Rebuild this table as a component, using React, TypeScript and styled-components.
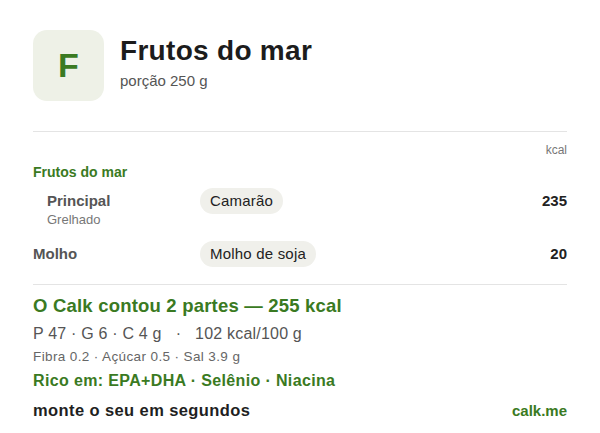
import React from "react";
import styled, { createGlobalStyle } from "styled-components";

const GlobalStyle = createGlobalStyle`
  html, body {
    margin: 0;
    padding: 0;
    background: #ffffff;
  }
  body {
    font-family: "Liberation Sans", Arial, Helvetica, sans-serif;
    color: #1f1f1f;
  }
`;

const green = "#3a7a22";

const Card = styled.div`
  width: 600px;
  height: 433px;
  box-sizing: border-box;
  padding: 30px 33px 0 33px;
  background: #ffffff;
`;

const Header = styled.div`
  display: flex;
  align-items: flex-start;
  gap: 16px;
  margin-bottom: 30px;
`;

const Tile = styled.div`
  width: 71px;
  height: 71px;
  border-radius: 14px;
  background: #eef1e7;
  display: flex;
  align-items: center;
  justify-content: center;
  font-size: 34px;
  font-weight: 700;
  color: ${green};
`;

const TitleBlock = styled.div`
  padding-top: 4px;
`;

const Title = styled.h1`
  margin: 0;
  font-size: 28px;
  line-height: 34px;
  font-weight: 700;
  letter-spacing: 0.3px;
  color: #1c1c1c;
`;

const Portion = styled.div`
  margin-top: 3px;
  font-size: 15px;
  line-height: 20px;
  color: #555555;
`;

const Divider = styled.hr`
  margin: 0;
  border: 0;
  height: 1px;
  background: #e4e4e4;
`;

const UnitRow = styled.div`
  margin-top: 10px;
  text-align: right;
  font-size: 12px;
  line-height: 16px;
  color: #777777;
`;

const GroupTitle = styled.div`
  margin-top: 5px;
  font-size: 14px;
  line-height: 18px;
  font-weight: 700;
  color: ${green};
`;

const ItemRow = styled.div<{ $first?: boolean }>`
  display: grid;
  grid-template-columns: 167px 1fr auto;
  align-items: start;
  margin-top: ${(p) => (p.$first ? "7px" : "13px")};
`;

const LabelCell = styled.div<{ $indent?: boolean }>`
  padding-left: ${(p) => (p.$indent ? "14px" : "0")};
`;

const Label = styled.div`
  padding-top: 4px;
  font-size: 15px;
  line-height: 18px;
  font-weight: 700;
  color: #555555;
`;

const SubLabel = styled.div`
  margin-top: 2px;
  font-size: 13px;
  line-height: 16px;
  color: #777777;
`;

const Pill = styled.span`
  justify-self: start;
  padding: 4px 10px;
  border-radius: 13px;
  background: #f0f0eb;
  font-size: 15px;
  line-height: 18px;
  letter-spacing: 0.2px;
  color: #222222;
`;

const Kcal = styled.div`
  padding-top: 4px;
  font-size: 15px;
  line-height: 18px;
  font-weight: 700;
  color: #222222;
  text-align: right;
`;

const Summary = styled.div`
  margin-top: 17px;
`;

const Total = styled.div`
  margin-top: 9px;
  font-size: 18.5px;
  line-height: 24px;
  font-weight: 700;
  letter-spacing: 0.2px;
  color: ${green};
`;

const Macros = styled.div`
  margin-top: 6px;
  font-size: 16px;
  line-height: 20px;
  letter-spacing: 0.2px;
  color: #555555;
  white-space: pre;
`;

const Fine = styled.div`
  margin-top: 5px;
  font-size: 13.5px;
  line-height: 16px;
  letter-spacing: 0.38px;
  color: #666666;
`;

const Rich = styled.div`
  margin-top: 6px;
  font-size: 16px;
  line-height: 20px;
  font-weight: 700;
  letter-spacing: 0.36px;
  color: ${green};
`;

const Footer = styled.div`
  margin-top: 9px;
  display: flex;
  justify-content: space-between;
  align-items: baseline;
`;

const Cta = styled.span`
  font-size: 16.5px;
  line-height: 20px;
  font-weight: 700;
  letter-spacing: 0.4px;
  color: #1f1f1f;
`;

const Brand = styled.span`
  font-size: 15px;
  font-weight: 700;
  color: ${green};
`;

type Item = {
  label: string;
  sub?: string;
  food: string;
  kcal: number;
  indent?: boolean;
};

const items: Item[] = [
  { label: "Principal", sub: "Grelhado", food: "Camarão", kcal: 235, indent: true },
  { label: "Molho", food: "Molho de soja", kcal: 20 },
];

const App: React.FC = () => {
  return (
    <>
      <GlobalStyle />
      <Card>
        <Header>
          <Tile>F</Tile>
          <TitleBlock>
            <Title>Frutos do mar</Title>
            <Portion>porção 250 g</Portion>
          </TitleBlock>
        </Header>
        <Divider />
        <UnitRow>kcal</UnitRow>
        <GroupTitle>Frutos do mar</GroupTitle>
        {items.map((item, i) => (
          <ItemRow key={item.label} $first={i === 0}>
            <LabelCell $indent={item.indent}>
              <Label>{item.label}</Label>
              {item.sub && <SubLabel>{item.sub}</SubLabel>}
            </LabelCell>
            <Pill>{item.food}</Pill>
            <Kcal>{item.kcal}</Kcal>
          </ItemRow>
        ))}
        <Summary>
          <Divider />
          <Total>O Calk contou 2 partes — 255 kcal</Total>
          <Macros>{"P 47 · G 6 · C 4 g   ·   102 kcal/100 g"}</Macros>
          <Fine>Fibra 0.2 · Açúcar 0.5 · Sal 3.9 g</Fine>
          <Rich>Rico em: EPA+DHA · Selênio · Niacina</Rich>
          <Footer>
            <Cta>monte o seu em segundos</Cta>
            <Brand>calk.me</Brand>
          </Footer>
        </Summary>
      </Card>
    </>
  );
};

export default App;
